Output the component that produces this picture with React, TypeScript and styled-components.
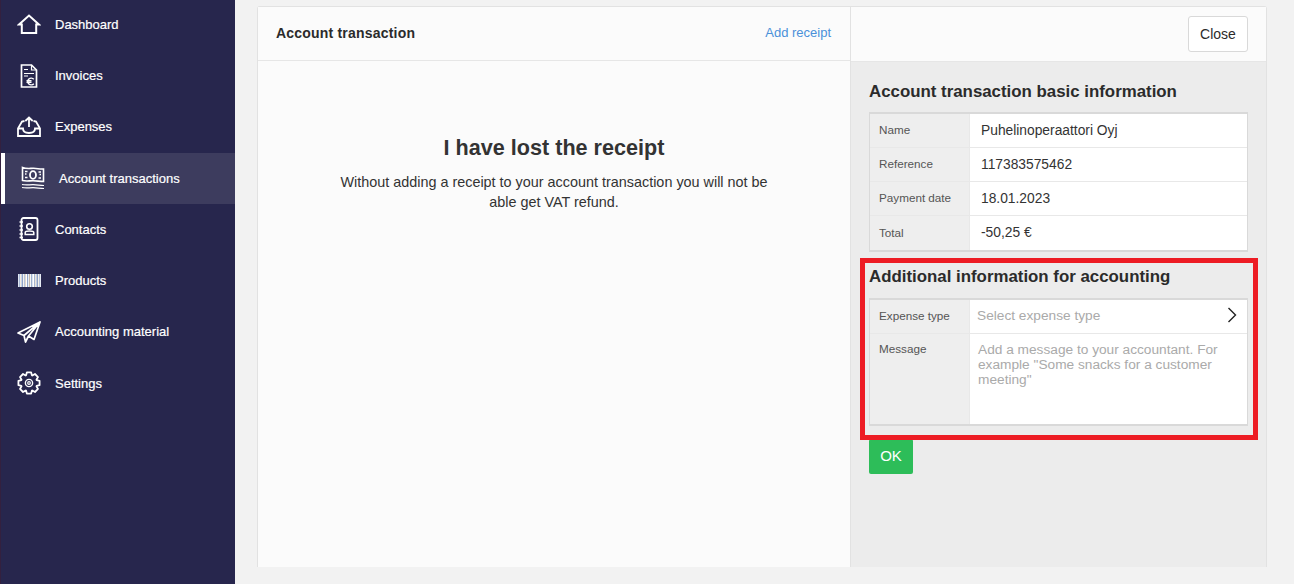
import React, { FunctionComponent, ReactNode } from "react";
import styled, { createGlobalStyle } from "styled-components";

const GlobalStyle = createGlobalStyle`
  html, body {
    margin: 0;
    padding: 0;
    height: 100%;
    overflow: hidden;
    background-color: #f2f2f2;
    font-family: "Liberation Sans", Arial, sans-serif;
  }
  * {
    box-sizing: border-box;
  }
`;

const HomeIcon = () => (
  <svg width="24" height="20" viewBox="0 0 24 20" fill="none" stroke="#fff" strokeWidth="2">
    <path d="M2 10.500 12 1.500l10 9h-2.800V19H4.800v-8.500z" />
  </svg>
);

const InvoiceIcon = () => (
  <svg width="18" height="24" viewBox="0 0 18 24" fill="none" stroke="#fff" strokeWidth="1.7">
    <path d="M1.500 1h10l5 5v17h-15z" />
    <path d="M11.500 1v5h5M4 5.500h4M4 9.500h10M4 12h4" strokeWidth="1.2" />
    <path d="M13.800 15.300a3.400 3.400 0 1 0 0 4.400M6.500 16.700h5M6.500 18.400h5" strokeWidth="1.4" />
  </svg>
);

const InboxIcon = () => (
  <svg width="24" height="21" viewBox="0 0 24 21" fill="none" stroke="#fff" strokeWidth="1.8">
    <path d="M12 11V1.500M8.300 5 12 1.500 15.700 5" />
    <path d="M7.500 5 5 5.500 1 12.500V20h22v-7.500L19 5.500 16.500 5" />
    <path d="M1 12.500h5c0 2.800 2 4.500 6 4.500s6-1.700 6-4.500h5" />
  </svg>
);

const MoneyIcon = () => (
  <svg width="24" height="24" viewBox="0 0 24 24" fill="none" stroke="#fff" strokeWidth="1.6">
    <path d="M1.500 1.500c4 1.500 7 .8 11 .8s6 1 10 .7v12.500c-4 0-6.500-.8-10.500-.8s-6.500.8-10.500-.2z" />
    <ellipse cx="12" cy="9" rx="3" ry="3.800" strokeWidth="1.8" />
    <path d="M4 5.500h2.500M4 8h1.500M4 11.500h2.500M17.500 6h2.500M18.500 8.500h1.500M17.500 12h2.500" strokeWidth="1.5" />
    <path d="M1 18.500c4 1 7 .2 11 .2s7 .8 11 .8M1 21.500c4 1 7 .2 11 .2s7 .8 11 .8" strokeWidth="1.2" />
  </svg>
);

const ContactsIcon = () => (
  <svg width="20" height="24" viewBox="0 0 20 24" fill="none" stroke="#fff" strokeWidth="1.8">
    <rect x="2.500" y="1" width="16" height="22" rx="2" />
    <path d="M.5 5h3.500M.5 9h3.500M.5 13h3.500M.5 17h3.500M.5 20.500h3.500" strokeWidth="1.3" />
    <circle cx="10.500" cy="9.500" r="2.800" strokeWidth="1.6" />
    <path d="M6.200 17.500v-2c0-.8 1.500-1.500 4.300-1.500s4.300.7 4.300 1.500v2z" strokeWidth="1.5" />
  </svg>
);

const BARCODE_BARS = [
  "#dfe6f2", "#a9b9d6", "#f4ece2", "#c9d4e8", "#8fa2c6", "#f6f3ee", "#b6c2da", "#e4d9cc",
  "#fff", "#94a6c8", "#e8edf5", "#c6b9ad", "#f7f7f7", "#9db0cf", "#dbe3f0", "#fff",
  "#a5b4d0", "#ece4d9", "#c3cfe4", "#8ea0c4", "#f5f1ea", "#b4c1db", "#e6ebf4"
];

const BarcodeIcon = () => (
  <svg width="23" height="13" viewBox="0 0 23 13">
    {BARCODE_BARS.map((color, index) => (
      <rect key={index} x={index} width="1" height="13" fill={color} />
    ))}
  </svg>
);

const PlaneIcon = () => (
  <svg width="24" height="22" viewBox="0 0 24 22" fill="none" stroke="#fff" strokeWidth="1.7" strokeLinejoin="round">
    <path d="M1 12 23 1l-6 17.500-5.500-3.500L8.500 21 7 14.500zM7 14.500 23 1 11.500 15" />
  </svg>
);

// 8 teeth, worked out rather than typed by hand
const gearPath = () => {
  const points: string[] = [];
  for (let i = 0; i < 8; i++) {
    const mid = (i * Math.PI) / 4;
    [
      [mid - 0.36, 8.2],
      [mid - 0.2, 10.8],
      [mid + 0.2, 10.8],
      [mid + 0.36, 8.2]
    ].forEach(([angle, radius]) => {
      const x = 12 + radius * Math.sin(angle);
      const y = 12 - radius * Math.cos(angle);
      points.push(`${x.toFixed(2)} ${y.toFixed(2)}`);
    });
  }
  return `M${points.join("L")}z`;
};

const GearIcon = () => (
  <svg width="24" height="24" viewBox="0 0 24 24" fill="none" stroke="#fff" strokeWidth="1.8" strokeLinejoin="round">
    <path d={gearPath()} />
    <circle cx="12" cy="12" r="3.600" strokeWidth="1.4" />
    <circle cx="12" cy="12" r="1.300" strokeWidth="1.200" />
  </svg>
);

interface NavEntry {
  label: string;
  icon: ReactNode;
  active?: boolean;
}

const NAV_ENTRIES: NavEntry[] = [
  { label: "Dashboard", icon: <HomeIcon /> },
  { label: "Invoices", icon: <InvoiceIcon /> },
  { label: "Expenses", icon: <InboxIcon /> },
  { label: "Account transactions", icon: <MoneyIcon />, active: true },
  { label: "Contacts", icon: <ContactsIcon /> },
  { label: "Products", icon: <BarcodeIcon /> },
  { label: "Accounting material", icon: <PlaneIcon /> },
  { label: "Settings", icon: <GearIcon /> }
];

const BASIC_INFO = [
  { label: "Name", value: "Puhelinoperaattori Oyj" },
  { label: "Reference", value: "117383575462" },
  { label: "Payment date", value: "18.01.2023" },
  { label: "Total", value: "-50,25 €" }
];

interface InfoRowProps {
  label: string;
  children: ReactNode;
}

const InfoRow: FunctionComponent<InfoRowProps> = ({ label, children }) => (
  <Row>
    <RowLabel>{label}</RowLabel>
    <RowValue>{children}</RowValue>
  </Row>
);

const App: FunctionComponent = () => {
  return (
    <Page>
      <GlobalStyle />
      <Sidebar>
        {NAV_ENTRIES.map(entry => (
          <NavItem key={entry.label} $active={entry.active}>
            <NavIcon>{entry.icon}</NavIcon>
            <span>{entry.label}</span>
          </NavItem>
        ))}
      </Sidebar>
      <Main>
        <Card>
          <LeftPanel>
            <PanelHeader>
              <PanelTitle>Account transaction</PanelTitle>
              <AddReceipt href="#">Add receipt</AddReceipt>
            </PanelHeader>
            <LostReceipt>
              <LostTitle>I have lost the receipt</LostTitle>
              <LostText>
                Without adding a receipt to your account transaction you will
                not be able get VAT refund.
              </LostText>
            </LostReceipt>
          </LeftPanel>
          <RightPanel>
            <RightHeader>
              <CloseButton type="button">Close</CloseButton>
            </RightHeader>
            <RightBody>
              <SectionTitle>Account transaction basic information</SectionTitle>
              <InfoTable>
                {BASIC_INFO.map(row => (
                  <InfoRow key={row.label} label={row.label}>
                    {row.value}
                  </InfoRow>
                ))}
              </InfoTable>
              <SectionTitle $second>Additional information for accounting</SectionTitle>
              <InfoTable>
                <InfoRow label="Expense type">
                  <SelectRow>
                    Select expense type
                    <svg width="10" height="16" viewBox="0 0 10 16" fill="none" stroke="#222" strokeWidth="1.4">
                      <path d="M1.500 1 8.500 8l-7 7" />
                    </svg>
                  </SelectRow>
                </InfoRow>
                <MessageRow>
                  <RowLabel $top>Message</RowLabel>
                  <MessageValue>
                    Add a message to your accountant. For example "Some snacks
                    for a customer meeting"
                  </MessageValue>
                </MessageRow>
              </InfoTable>
              <OkButton type="button">OK</OkButton>
              <Highlight />
            </RightBody>
          </RightPanel>
        </Card>
      </Main>
    </Page>
  );
};

export default App;

const Page = styled.div`
  display: flex;
  width: 1294px;
  height: 584px;
  overflow: hidden;
`;

const Sidebar = styled.nav`
  flex: 0 0 235px;
  height: 584px;
  background-color: #27264d;
  border-left: 1px solid #33203f;
  overflow: hidden;
`;

const NavItem = styled.div<{ $active?: boolean }>`
  display: flex;
  align-items: center;
  height: 51.25px;
  padding-left: 16px;
  color: #fff;
  font-size: 13px;
  -webkit-text-stroke: 0.2px #fff;
  background-color: ${props => (props.$active ? "#3d3c5e" : "transparent")};
  border-left: ${props => (props.$active ? "4px solid #fff" : "none")};
  &:first-child {
    margin-top: -1.15px;
  }
`;

const NavIcon = styled.span`
  display: flex;
  align-items: center;
  justify-content: center;
  flex: 0 0 24px;
  margin-right: 14px;
`;

const Main = styled.main`
  flex: 1;
  padding: 6px 27px 17px 22px;
  background-color: #f2f2f2;
`;

const Card = styled.div`
  display: flex;
  height: 561px;
  border: 1px solid #e2e2e2;
  border-bottom: none;
  border-radius: 3px 3px 0 0;
`;

const LeftPanel = styled.section`
  flex: 0 0 593px;
  background-color: #fbfbfb;
  border-right: 1px solid #e2e2e2;
`;

const PanelHeader = styled.header`
  display: flex;
  align-items: center;
  justify-content: space-between;
  height: 54px;
  padding: 0 19px 2px 18px;
  border-bottom: 1px solid #e6e6e6;
`;

const PanelTitle = styled.h2`
  margin: 0;
  color: #2b2b2b;
  font-size: 14px;
  font-weight: 700;
  letter-spacing: 0.2px;
`;

const AddReceipt = styled.a`
  color: #4a90d9;
  font-size: 13px;
  text-decoration: none;
`;

const LostReceipt = styled.div`
  display: flex;
  flex-direction: column;
  align-items: center;
  padding: 73px 80px 0;
  text-align: center;
`;

const LostTitle = styled.h1`
  margin: 0 0 11px;
  color: #333;
  font-size: 21.6px;
  line-height: 27px;
  font-weight: 700;
`;

const LostText = styled.p`
  margin: 0;
  color: #333;
  font-size: 14.4px;
  line-height: 20px;
`;

const RightPanel = styled.section`
  display: flex;
  flex: 1;
  flex-direction: column;
  background-color: #ececec;
`;

const RightHeader = styled.header`
  display: flex;
  align-items: center;
  justify-content: flex-end;
  flex: 0 0 55px;
  padding-right: 18px;
  background-color: #fbfbfb;
  border-bottom: 1px solid #e6e6e6;
`;

const CloseButton = styled.button`
  width: 60px;
  height: 36px;
  padding: 0;
  color: #2b2b2b;
  font-family: inherit;
  font-size: 14px;
  background-color: #fff;
  border: 1px solid #d9d9d9;
  border-radius: 3px;
`;

const RightBody = styled.div`
  position: relative;
  flex: 1;
  padding: 20px 18px 0;
`;

const SectionTitle = styled.h3<{ $second?: boolean }>`
  margin: ${props => (props.$second ? "15px 0 11px" : "0 0 10px")};
  color: #2b2b2b;
  font-size: 16.85px;
  line-height: 20px;
  font-weight: 700;
`;

const InfoTable = styled.div`
  border: 2px solid #d9d9d9;
  border-left-width: 1px;
  border-right-width: 1px;
  background-color: #fff;
`;

const Row = styled.div`
  display: flex;
  height: 34px;
  border-bottom: 1px solid #e8e8e8;
  &:last-child {
    border-bottom: none;
  }
`;

const MessageRow = styled(Row)`
  height: 90px;
`;

const RowLabel = styled.div<{ $top?: boolean }>`
  display: flex;
  align-items: ${props => (props.$top ? "flex-start" : "center")};
  flex: 0 0 100px;
  padding: ${props => (props.$top ? "8px 0 0 9px" : "0 0 2px 9px")};
  color: #555;
  font-size: 11.7px;
  background-color: #eeeeee;
  border-right: 1px solid #e8e8e8;
`;

const RowValue = styled.div`
  display: flex;
  align-items: center;
  flex: 1;
  padding: 0 11px 1px;
  color: #333;
  font-size: 13.8px;
`;

const SelectRow = styled.div`
  display: flex;
  align-items: center;
  justify-content: space-between;
  width: 100%;
  margin-left: -4px;
  margin-right: -1px;
  padding-bottom: 2px;
  color: #aaa;
  font-size: 13.7px;
  svg {
    margin-right: -5px;
  }
`;

const MessageValue = styled.div`
  flex: 1;
  padding: 8px 8px 0 8px;
  color: #aaa;
  font-size: 13.7px;
  line-height: 15px;
`;

const OkButton = styled.button`
  display: block;
  width: 44px;
  height: 35px;
  margin-top: 13px;
  padding: 0 0 2px;
  color: #fff;
  font-family: inherit;
  font-size: 15px;
  background-color: #2dbd59;
  border: none;
  border-radius: 2px;
`;

const Highlight = styled.div`
  position: absolute;
  left: 9px;
  top: 196px;
  width: 398px;
  height: 182px;
  border: 5px solid #ed1c24;
  pointer-events: none;
`;
